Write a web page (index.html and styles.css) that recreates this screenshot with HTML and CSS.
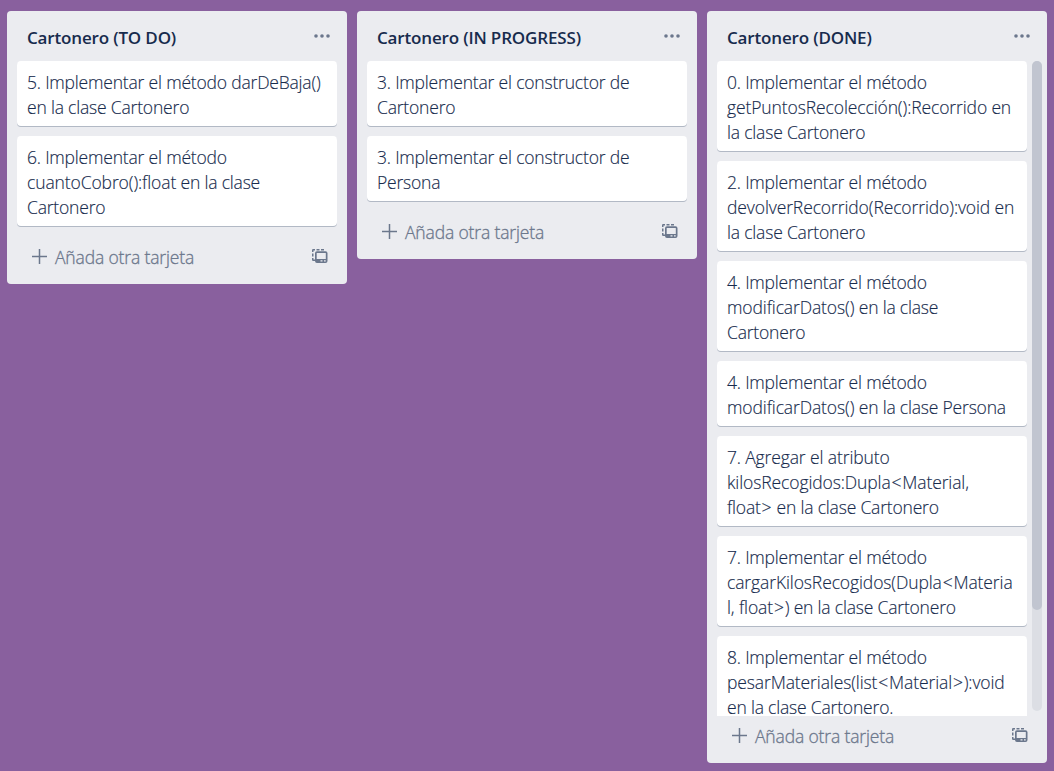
FILE: index.html
```html
<!DOCTYPE html>
<html lang="es">
<head>
<meta charset="utf-8">
<title>Cartonero</title>
<link rel="stylesheet" href="styles.css">
</head>
<body>
<svg class="defs" aria-hidden="true">
  <symbol id="dots" viewBox="0 0 16 4"><circle cx="2" cy="2" r="1.8"/><circle cx="8" cy="2" r="1.8"/><circle cx="14" cy="2" r="1.8"/></symbol>
  <symbol id="plus" viewBox="0 0 15 15"><path d="M7.5 0v15M0 7.5h15" fill="none" stroke="currentColor" stroke-width="1.5"/></symbol>
  <symbol id="template" viewBox="0 0 16 15"><path d="M0 3V1.200A1.200 1.200 0 0 1 1.200 0H3v1.500H1.500V3zM4.500 0h3v1.500h-3zM9 0h3v1.500H9zM0 4.500h1.500v3H0zM0 9h1.500v1.500H3V12H1.200A1.200 1.200 0 0 1 0 10.800z"/><path fill-rule="evenodd" d="M5 2.200h8.500a2 2 0 0 1 2 2V12a2 2 0 0 1-2 2H5a2 2 0 0 1-2-2V4.200a2 2 0 0 1 2-2zM4.700 3.900v6.100h9.100V3.900zM8.500 11.300v1.200h2v-1.200zM12 11.300v1.200h1.700v-1.200z"/></symbol>
</svg>
<main class="board">
  <section class="list">
    <header class="list-header"><h2>Cartonero (TO DO)</h2><svg class="dots"><use href="#dots"/></svg></header>
    <div class="cards">
      <article class="card">5. Implementar el método darDeBaja()<br>en la clase Cartonero</article>
      <article class="card">6. Implementar el método<br><span class="code">cuantoCobro():float</span> en la clase<br>Cartonero</article>
    </div>
    <footer class="list-footer"><svg class="plus"><use href="#plus"/></svg><span>Añada otra tarjeta</span><svg class="template"><use href="#template"/></svg></footer>
  </section>
  <section class="list">
    <header class="list-header"><h2>Cartonero (IN PROGRESS)</h2><svg class="dots"><use href="#dots"/></svg></header>
    <div class="cards">
      <article class="card">3. Implementar el constructor de<br>Cartonero</article>
      <article class="card">3. Implementar el constructor de<br>Persona</article>
    </div>
    <footer class="list-footer"><svg class="plus"><use href="#plus"/></svg><span>Añada otra tarjeta</span><svg class="template"><use href="#template"/></svg></footer>
  </section>
  <section class="list list-full">
    <header class="list-header"><h2>Cartonero (DONE)</h2><svg class="dots"><use href="#dots"/></svg></header>
    <div class="list-body">
      <div class="cards">
        <article class="card">0. Implementar el método<br><span class="code">getPuntosRecolección():Recorrido</span> en<br>la clase Cartonero</article>
        <article class="card">2. Implementar el método<br><span class="code">devolverRecorrido(Recorrido):void</span> en<br>la clase Cartonero</article>
        <article class="card">4. Implementar el método<br><span class="code">modificarDatos()</span> en la clase<br>Cartonero</article>
        <article class="card">4. Implementar el método<br><span class="code">modificarDatos()</span> en la clase Persona</article>
        <article class="card">7. <span class="code">Agregar el atributo</span><br><span class="code">kilosRecogidos:Dupla<span class="angle">&lt;</span>Material,</span><br>float<span class="angle">&gt;</span> en la clase Cartonero</article>
        <article class="card">7. Implementar el método<br><span class="code">cargarKilosRecogidos(Dupla<span class="angle">&lt;</span>Materia</span><br><span class="code">l, float<span class="angle">&gt;</span>)</span> en la clase Cartonero</article>
        <article class="card">8. Implementar el método<br><span class="code">pesarMateriales(list<span class="angle">&lt;</span>Material<span class="angle">&gt;</span>):void</span><br>en la clase Cartonero.</article>
      </div>
      <div class="scroll-track"><div class="scroll-thumb"></div></div>
    </div>
    <footer class="list-footer"><svg class="plus"><use href="#plus"/></svg><span>Añada otra tarjeta</span><svg class="template"><use href="#template"/></svg></footer>
  </section>
</main>
</body>
</html>
```
FILE: styles.css
```css
* { box-sizing: border-box; }
body {
  margin: 0;
  height: 771px;
  overflow: hidden;
  background: #89609e;
  color: #172b4d;
  font: 300 17.5px/25px "Open Sans", "Noto Sans", sans-serif;
}
.defs { display: none; }
svg { fill: currentColor; }
.board { display: flex; align-items: flex-start; gap: 10px; padding: 11px 7px 0; }
.list { flex: none; width: 340px; border-radius: 4px; background: #ebecf0; }
.list-full { height: 752px; }
.list-header { display: flex; justify-content: space-between; height: 50px; padding: 14px 17px 0 20px; }
.list-header h2 { margin: 0; font-size: 17px; font-weight: 600; line-height: 25px; letter-spacing: -0.16px; white-space: nowrap; }
.dots { width: 16px; height: 4px; margin-top: 9px; color: #6b778c; }
.cards { display: flex; flex-direction: column; gap: 10px; padding: 0 10px; }
.card {
  flex: none;
  padding: 9px 10px 6px;
  border-radius: 4px;
  background: #fff;
  box-shadow: 0 1px 0 rgba(9, 30, 66, .25);
  letter-spacing: -0.19px;
  -webkit-text-stroke: 0.15px currentColor;
  white-space: nowrap;
}
.code { letter-spacing: -0.11px; }
.angle { margin: 0 0.9px; }
.list-footer { display: flex; height: 58px; padding: 19px 19px 0 25px; color: #6b778c; letter-spacing: -0.15px; }
.list-footer span { flex: 1; margin-left: 8px; white-space: nowrap; -webkit-text-stroke: 0.3px currentColor; }
.plus { width: 15px; height: 15px; margin-top: 4px; }
.template { width: 16px; height: 15px; margin-top: 4px; }
.list-body { display: flex; height: 655px; padding-right: 5px; overflow: hidden; }
.list-body .cards { width: 325px; padding-right: 5px; }
.scroll-track { width: 10px; height: 650px; border-radius: 5px; background: #dcdee4; }
.scroll-thumb { height: 549px; border-radius: 5px; background: #c1c5d0; }
.list-full .list-footer { height: 47px; padding-top: 8px; }
```
